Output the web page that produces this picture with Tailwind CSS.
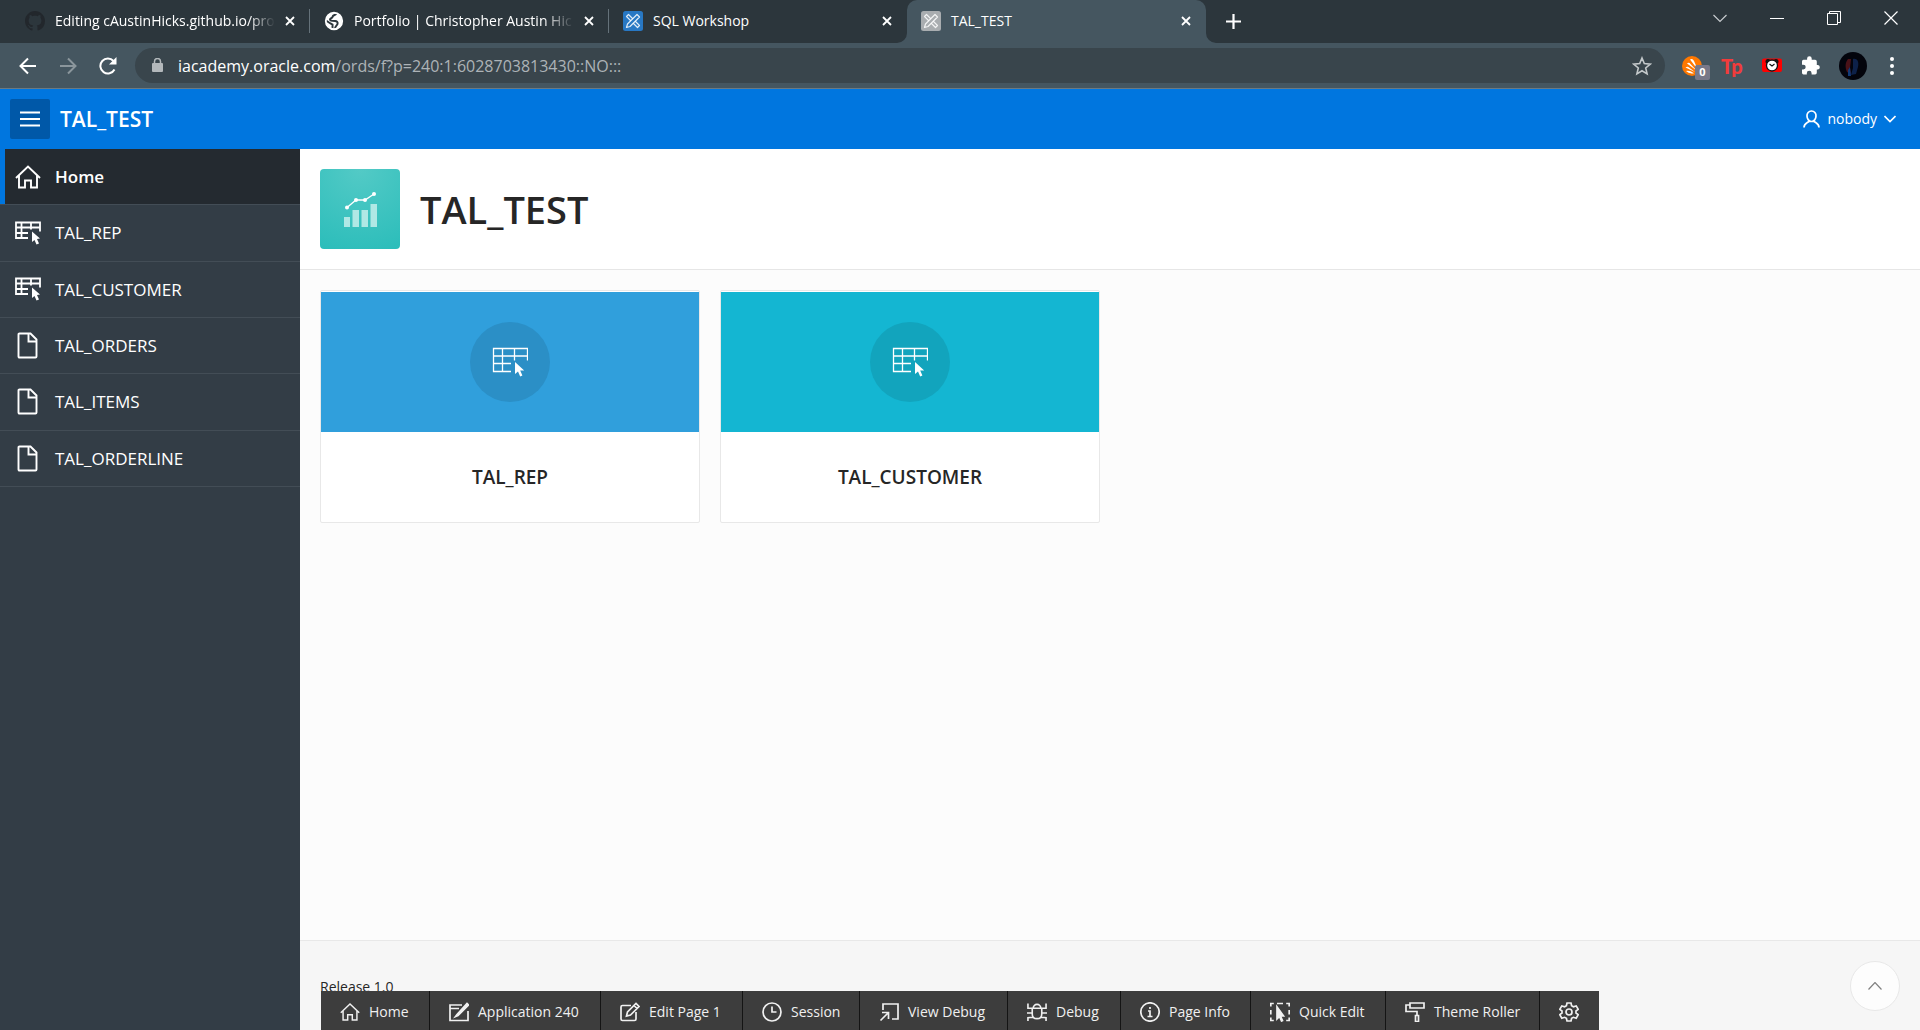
<!DOCTYPE html>
<html lang="en">
<head>
<meta charset="utf-8">
<meta name="viewport" content="width=device-width, initial-scale=1">
<title>TAL_TEST</title>
<script src="https://cdn.jsdelivr.net/npm/@tailwindcss/browser@4"></script>
</head>
<body class="flex min-h-screen flex-col bg-[#fcfcfc] font-['Open_Sans','Noto_Sans',sans-serif] text-[#262626]">

<!-- Shared icons -->
<svg class="hidden" aria-hidden="true">
  <symbol id="home" viewBox="0 0 26 24"><path d="M1 13 13 1.5 25 13M4 10.5V22.5h6v-7h6v7h6V10.5" fill="none" stroke="currentColor" stroke-width="1.9"/></symbol>
  <symbol id="table" viewBox="0 0 36 30"><path d="M19 24.500H1.500V1.500h34v12M1.500 9h34M1.500 16.500h17.500M10.500 1.500v23M22.500 1.500v12" fill="none" stroke="currentColor" stroke-width="1.300"/><path d="M23 15v12l3-2.600 2.200 5 2.200-1-2.200-4.800 4-.2z" fill="currentColor"/></symbol>
  <symbol id="table-small" viewBox="0 0 26 24"><path d="M13 17H1V1.500h24v9M1 6.500h24M1 12h12M6.500 1.500V17M16 1.500v7" fill="none" stroke="currentColor" stroke-width="1.800"/><path d="M17 10.500v10.500l2.500-2 2 4.500 2.500-1-2-4.500 3-.5z" fill="currentColor"/></symbol>
  <symbol id="file" viewBox="0 0 22 27"><path d="M1.500 2.500q0-1 1-1h11l6 6v17q0 1-1 1h-16q-1 0-1-1zM11.500 2v7.500h7.500" fill="none" stroke="currentColor" stroke-width="1.900"/></symbol>
  <symbol id="x" viewBox="0 0 10 10"><path d="m1 1 8 8M9 1 1 9" fill="none" stroke="currentColor" stroke-width="1.800"/></symbol>
  <symbol id="apex" viewBox="0 0 20 20"><rect width="20" height="20" rx="2.500" fill="currentColor"/><g fill="currentColor" stroke="#fff" stroke-opacity=".85" stroke-width="1.200" stroke-linejoin="round"><path d="M3.500 5.500 5.500 3.500l11 11-2 2z"/><path d="m14 3.500 2.500 2.500L7 15.500l-3.500 1 1-3.500z"/></g></symbol>
</svg>

<!-- Browser tabs -->
<div class="flex h-[43px] shrink-0 items-stretch bg-[#2c363c] pl-[10px] text-sm text-white">
  <div class="relative flex w-[300px] items-center gap-[10px] pr-[15px] pb-[2px] pl-[15px]">
    <svg class="size-5 shrink-0 text-[#22272c]" viewBox="0 0 16 16" fill="currentColor"><path d="M8 0C3.580 0 0 3.580 0 8c0 3.540 2.290 6.530 5.470 7.590.4.070.55-.17.55-.38 0-.19-.01-.82-.01-1.490-2.010.37-2.530-.49-2.690-.94-.09-.23-.48-.94-.82-1.130-.28-.15-.68-.52-.01-.53.63-.01 1.080.58 1.230.82.72 1.210 1.870.87 2.330.66.07-.52.28-.87.51-1.070-1.780-.2-3.640-.89-3.640-3.950 0-.87.310-1.590.82-2.150-.08-.2-.36-1.020.08-2.120 0 0 .67-.21 2.200.82.640-.18 1.320-.27 2-.27s1.360.09 2 .27c1.530-1.040 2.200-.82 2.200-.82.440 1.100.160 1.920.080 2.120.510.560.820 1.270.820 2.150 0 3.070-1.870 3.750-3.650 3.950.290.250.540.730.540 1.480 0 1.070-.010 1.930-.010 2.200 0 .210.150.460.550.380A8 8 0 0 0 16 8c0-4.420-3.580-8-8-8"/></svg>
    <span class="min-w-0 flex-1 overflow-hidden whitespace-nowrap [mask-image:linear-gradient(90deg,#000_88%,transparent)]">Editing cAustinHicks.github.io/pro</span>
    <button aria-label="Close tab"><svg class="size-[10px]"><use href="#x"/></svg></button>
    <span class="absolute right-0 h-6 w-px bg-[#65727a]"></span>
  </div>
  <div class="relative flex w-[299px] items-center gap-[10px] pr-[15px] pb-[2px] pl-[14px]">
    <svg class="size-5 shrink-0" viewBox="0 0 20 20"><circle cx="10" cy="10" r="7.900" fill="#fff"/><path d="M12.500 2.500c-1 2-3.500 1-4 3.500-.3 1.500-2.500 1-2.500 2.500s3 1.500 5 1.500 3 1.500 2.500 3-2 1.500-2.500 4.500M2 9.500l4.500 3 2 1v4" fill="none" stroke="#2c363c" stroke-width="2"/><circle cx="10" cy="10" r="8.200" fill="none" stroke="#fff" stroke-width="1.900"/></svg>
    <span class="min-w-0 flex-1 overflow-hidden whitespace-nowrap [mask-image:linear-gradient(90deg,#000_86%,transparent)]">Portfolio | Christopher Austin Hic</span>
    <button aria-label="Close tab"><svg class="size-[10px]"><use href="#x"/></svg></button>
    <span class="absolute right-0 h-6 w-px bg-[#65727a]"></span>
  </div>
  <div class="flex w-[298px] items-center gap-[10px] pr-[15px] pb-[2px] pl-[14px]">
    <svg class="size-5 shrink-0 text-[#2878c4]"><use href="#apex"/></svg>
    <span class="min-w-0 flex-1 whitespace-nowrap">SQL Workshop</span>
    <button aria-label="Close tab"><svg class="size-[10px]"><use href="#x"/></svg></button>
  </div>
  <div class="relative flex w-[299px] items-center gap-[10px] rounded-t-[10px] bg-[#455660] pr-[15px] pb-[2px] pl-[14px]">
    <svg class="absolute bottom-0 -left-[10px] size-[10px]" viewBox="0 0 10 10"><path d="M10 0v10H0A10 10 0 0 0 10 0" fill="#455660"/></svg>
    <svg class="absolute bottom-0 -right-[10px] size-[10px]" viewBox="0 0 10 10"><path d="M0 0v10h10A10 10 0 0 1 0 0" fill="#455660"/></svg>
    <svg class="size-5 shrink-0 text-[#a9adb0]"><use href="#apex"/></svg>
    <span class="min-w-0 flex-1 whitespace-nowrap">TAL_TEST</span>
    <button aria-label="Close tab"><svg class="size-[10px]"><use href="#x"/></svg></button>
  </div>
  <button aria-label="New tab" class="ml-5"><svg class="size-[15px]" viewBox="0 0 15 15"><path d="M7.500 0v15M0 7.500h15" stroke="#fff" stroke-width="2.200"/></svg></button>
  <div class="ml-auto flex items-center gap-[43px] pr-[22px] pb-[7px]">
    <button aria-label="Search tabs"><svg class="size-[14px]" viewBox="0 0 14 14"><path d="m.5 4 6.500 6.500L13.500 4" fill="none" stroke="#c8cccf" stroke-width="1.200"/></svg></button>
    <button aria-label="Minimize"><svg class="size-[14px]" viewBox="0 0 14 14"><path d="M0 7.500h14" stroke="#fff"/></svg></button>
    <button aria-label="Restore"><svg class="size-[14px]" viewBox="0 0 14 14"><path d="M.5 2.500h10v11H.5zM2.500 2.500v-2h11v11h-3" fill="none" stroke="#fff"/></svg></button>
    <button aria-label="Close"><svg class="size-[14px]" viewBox="0 0 14 14"><path d="m.5.5 13 13m0-13-13 13" stroke="#fff" stroke-width="1.200"/></svg></button>
  </div>
</div>

<!-- Address bar -->
<div class="flex h-[46px] shrink-0 items-center border-b border-[#6b7a82] bg-[#455660] pl-[19px] pr-[20px]">
  <div class="flex w-[116px] items-center gap-[22px]">
    <button aria-label="Back"><svg class="size-[18px]" viewBox="0 0 18 18"><path d="M17 9H2M9 1.500 1.500 9 9 16.500" fill="none" stroke="#fff" stroke-width="2"/></svg></button>
    <button aria-label="Forward"><svg class="size-[18px]" viewBox="0 0 18 18"><path d="M1 9h15M9 1.500 16.500 9 9 16.500" fill="none" stroke="#8b969c" stroke-width="2"/></svg></button>
    <button aria-label="Reload"><svg class="size-[18px]" viewBox="0 0 18 18"><path d="M15.500 12.500A7.500 7.500 0 1 1 14.500 4" fill="none" stroke="#fff" stroke-width="2"/><path d="M17.500 0v7.500H10z" fill="#fff"/></svg></button>
  </div>
  <div class="flex h-[35px] flex-1 items-center rounded-full bg-[#39454c] pl-[17px] pr-[13px]">
    <svg class="h-[15px] w-[11px]" viewBox="0 0 11 15"><rect y="5" width="11" height="9" rx="1" fill="#b3b8bb"/><path d="M2.500 5.500V3.500a3 3 0 0 1 6 0v2" fill="none" stroke="#b3b8bb" stroke-width="1.500"/></svg>
    <div class="ml-[15px] flex-1 whitespace-nowrap text-base text-[#adb3b7]"><span class="text-white">iacademy.oracle.com</span>/ords/f?p=240:1:6028703813430::NO:::</div>
    <button aria-label="Bookmark"><svg class="size-[20px]" viewBox="0 0 20 20"><path d="m10 2 2.300 5.600 6 .5-4.600 3.900 1.400 5.900L10 14.700l-5.100 3.200 1.400-5.900L1.700 8.100l6-.5z" fill="none" stroke="#c3c8ca" stroke-width="1.600"/></svg></button>
  </div>
  <div class="ml-[17px] flex w-[218px] items-center justify-between">
    <div class="relative h-7 w-5">
      <svg class="absolute top-1 size-5" viewBox="0 0 20 20"><circle cx="10" cy="10" r="10" fill="#ff7800"/><path d="M8 3.500q2.500-1.500 4 1.500l4 9zM5 7.500q2-1.500 3.500.5l6 6.500zM3.500 11.500q2-1.500 3.500 0l6 4.500zM4 15q3-1 8 2.200-5 1-8-2.200" fill="#fff"/></svg>
      <span class="absolute left-[13px] top-[13px] flex h-[15px] w-[15px] items-center justify-center rounded-xs bg-[#787888] text-[11px] font-bold text-white">0</span>
    </div>
    <span class="flex font-['Lato',sans-serif] text-xl leading-6 font-black text-[#f23b3b]" aria-label="Tp">Tp</span>
    <svg class="h-[15px] w-5" viewBox="0 0 20 15"><rect y=".5" width="20" height="13.500" rx="2" fill="#f00"/><circle cx="6" cy="3.500" r="2.500" fill="#111"/><circle cx="14" cy="3.500" r="2.500" fill="#111"/><circle cx="10" cy="7.500" r="5.500" fill="#fff" stroke="#111" stroke-width="1.300"/><path d="m7.500 6 2.500 2 2.500-2" fill="none" stroke="#111" stroke-width="1.100"/></svg>
    <svg class="size-[19px]" viewBox="0 0 19 19"><path d="M17 9h-1.200V5.500q0-1.700-1.700-1.700h-3.400V2.500a2.300 2.300 0 0 0-4.600 0v1.300H2.500Q1 3.800 1 5.500v3.200h1.300a2.400 2.400 0 0 1 0 4.800H1v3.300q0 1.700 1.500 1.700h3.300v-1.300a2.400 2.400 0 0 1 4.800 0v1.300h3.500q1.700 0 1.700-1.700v-3.300H17A2.300 2.300 0 0 0 17 9" fill="#fff"/></svg>
    <svg class="size-7" viewBox="0 0 28 28"><circle cx="14" cy="14" r="14" fill="#03040c"/><path d="M9 7c-3 4-3 8-1 13l4 2-1-6 1-9z" fill="#4a1218"/><path d="M14 7c5-1 6 4 5 8l-2 7-5 1 2-7z" fill="#0d2149"/><path d="m9 18 2-3 1 9H9z" fill="#123a78"/></svg>
    <button aria-label="Browser menu" class="mr-[6px] pl-1"><svg class="h-[18px] w-1" viewBox="0 0 4 18" fill="#fff"><circle cx="2" cy="2" r="2"/><circle cx="2" cy="9" r="2"/><circle cx="2" cy="16" r="2"/></svg></button>
  </div>
</div>

<!-- Application header -->
<header class="flex h-[60px] shrink-0 items-center bg-[#0076df] px-[10px] text-white">
  <button aria-label="Toggle navigation" class="flex size-10 items-center justify-center rounded-xs bg-[#0058a8]"><svg class="h-4 w-5" viewBox="0 0 20 16"><path d="M0 1.500h20M0 8h20M0 14.500h20" stroke="#fff" stroke-width="2.200"/></svg></button>
  <a href="#" class="ml-[10px] pt-[2px] text-[21px] font-semibold">TAL_TEST</a>
  <button class="ml-auto mr-[14px] flex items-center text-sm">
    <svg class="mr-[7px] h-[18px] w-[17px]" viewBox="0 0 17 18"><path d="M8.500 1a4.500 4.500 0 0 1 4.500 5c0 3-2 5.500-4.500 5.500S4 9 4 6a4.500 4.500 0 0 1 4.500-5M1 17.500c0-4 2-4 5.500-6.500M16 17.500c0-4-2-4-5.500-6.500" fill="none" stroke="#fff" stroke-width="1.700"/></svg>
    nobody
    <svg class="ml-[7px] h-2 w-3" viewBox="0 0 12 8"><path d="m.5 1 5.500 5.500L11.500 1" fill="none" stroke="#fff" stroke-width="1.600"/></svg>
  </button>
</header>

<div class="flex flex-1">
  <nav class="w-[300px] shrink-0 bg-[#333d46] text-[17px] text-white">
    <ul class="grid min-h-[338px] auto-rows-fr *:flex *:border-b *:border-[#434d56]">
      <li><a href="#" class="flex flex-1 items-center border-l-5 border-[#0076df] bg-[#242a30] font-semibold"><svg class="ml-[10px] mr-[14px] h-6 w-[26px]"><use href="#home"/></svg>Home</a></li>
      <li><a href="#" class="flex flex-1 items-center pl-[15px]"><svg class="mr-[14px] h-6 w-[26px]"><use href="#table-small"/></svg>TAL_REP</a></li>
      <li><a href="#" class="flex flex-1 items-center pl-[15px]"><svg class="mr-[14px] h-6 w-[26px]"><use href="#table-small"/></svg>TAL_CUSTOMER</a></li>
      <li><a href="#" class="flex flex-1 items-center pl-[17px]"><svg class="mr-4 h-[27px] w-[22px]"><use href="#file"/></svg>TAL_ORDERS</a></li>
      <li><a href="#" class="flex flex-1 items-center pl-[17px]"><svg class="mr-4 h-[27px] w-[22px]"><use href="#file"/></svg>TAL_ITEMS</a></li>
      <li><a href="#" class="flex flex-1 items-center pl-[17px]"><svg class="mr-4 h-[27px] w-[22px]"><use href="#file"/></svg>TAL_ORDERLINE</a></li>
    </ul>
  </nav>

  <div class="flex min-w-0 flex-1 flex-col">
    <div class="flex items-center gap-5 border-b border-[#e6e6e6] bg-white p-5">
      <div class="flex size-20 items-center justify-center rounded-[4px] bg-[radial-gradient(circle_at_50%_0%,#53cac6,#2bbdba)]">
        <svg class="h-[38px] w-[34px]" viewBox="0 0 34 38"><path d="M1 27h6v10H1zM9.500 20h6.500v17H9.500zM18.500 20H25v17h-6.500zM27.500 14H34v23h-6.500z" fill="#b0e8e5"/><path d="m4 17.500 9-7.500h9L31 4" fill="none" stroke="#fff" stroke-width="1.300"/><g fill="#fff"><circle cx="4" cy="17.500" r="2"/><circle cx="13" cy="10" r="2"/><circle cx="22" cy="10" r="2"/><circle cx="31" cy="4" r="2"/></g></svg>
      </div>
      <h1 class="text-[38px] leading-[48px] font-semibold">TAL_TEST</h1>
    </div>

    <main class="grid flex-1 auto-rows-min grid-cols-4 gap-5 p-5">
      <a href="#" class="block rounded-xs border border-[#e8e8e8] bg-white pt-px">
        <span class="flex h-[140px] items-center justify-center bg-[#309fdc] text-white"><span class="flex size-20 items-center justify-center rounded-full bg-[#2b8fc6]"><svg class="h-[30px] w-9"><use href="#table"/></svg></span></span>
        <span class="flex h-[90px] items-center justify-center text-[19px] font-semibold">TAL_REP</span>
      </a>
      <a href="#" class="block rounded-xs border border-[#e8e8e8] bg-white pt-px">
        <span class="flex h-[140px] items-center justify-center bg-[#14b6d2] text-white"><span class="flex size-20 items-center justify-center rounded-full bg-[#12a4bd]"><svg class="h-[30px] w-9"><use href="#table"/></svg></span></span>
        <span class="flex h-[90px] items-center justify-center text-[19px] font-semibold">TAL_CUSTOMER</span>
      </a>
    </main>

    <footer class="relative flex h-[90px] items-start border-t border-[#e8e8e8] bg-[#f6f6f6] px-5 pt-9 text-sm">
      Release 1.0
      <button aria-label="Back to top" class="absolute right-5 top-5 flex size-[50px] items-center justify-center rounded-full border border-[#e8e8e8] bg-[#fdfdfd]"><svg class="h-2 w-[14px]" viewBox="0 0 14 8"><path d="m.5 7.500 6.500-7 6.500 7" fill="none" stroke="#808080" stroke-width="1.200"/></svg></button>
    </footer>
  </div>
</div>

<!-- Developer toolbar, pinned over the page -->
<div role="toolbar" aria-label="Developer toolbar" class="fixed bottom-0 left-1/2 flex h-[39px] -translate-x-1/2 whitespace-nowrap bg-[#3d3d3d] text-sm text-[#f0f0f0] *:flex *:items-center *:gap-[9px] *:border-r *:border-[#141414] *:pt-[2px] *:pl-[19px] [&_svg]:size-5 [&_svg]:shrink-0 [&_svg]:fill-none [&_svg]:stroke-current [&_svg]:stroke-[1.700]">
  <button class="w-[109px]"><svg><use href="#home"/></svg>Home</button>
  <button class="w-[171px]"><svg viewBox="0 0 20 20"><path d="M13 3H1v15.500h18V9M1 6.500h9"/><path d="M8 12.500 18 1.500l1.500 1.500L9 13.500l-2.500 1z" fill="currentColor"/></svg>Application 240</button>
  <button class="w-[142px]"><svg viewBox="0 0 20 20"><path d="M11 3.500H2.500Q1 3.500 1 5v12q0 1.500 1.500 1.500h12q1.500 0 1.500-1.500V10M6.500 14l1-4L16 1.500l3 3L10.500 13zM14 3.500l3 3"/></svg>Edit Page 1</button>
  <button class="w-[117px]"><svg viewBox="0 0 20 20"><circle cx="10" cy="10" r="9"/><path d="M10 4.500V10h4.500"/></svg>Session</button>
  <button class="w-[148px]"><svg viewBox="0 0 20 20"><path d="M4 8V2h15v15h-6M1.500 18.500l8-8M3 10.500h6.500V17"/></svg>View Debug</button>
  <button class="w-[113px]"><svg viewBox="0 0 21 20"><path d="M5.500 6h10v6q0 5-5 5t-5-5zM6.500 6a4 4 0 0 1 8 0M1 1v5h4.500M20 1v5h-4.500M0 11h5.500M21 11h-5.500M1 19.500V16l5-.5M20 19.500V16l-5-.5"/></svg>Debug</button>
  <button class="w-[130px]"><svg viewBox="0 0 20 20"><circle cx="10" cy="10" r="9.200"/><path d="M8 9h2v5.500M7.500 14.500h5M10 5v2"/></svg>Page Info</button>
  <button class="w-[135px]"><svg viewBox="0 0 20 20"><path d="M.8 4.500V1.500h3M7 1.500h6M16.200 1.500h3v3M19.200 8v4.500M19.200 15.500v3h-3M.8 8v4.500M.8 15.500v3h3"/><path d="M7 5v12l2.500-2.500 2 4.500 1-.5-2-4.500h3z" fill="currentColor"/></svg>Quick Edit</button>
  <button class="w-[154px]"><svg viewBox="0 0 20 20"><path d="M5 1h14v5H5zM5 3H1v6.500h11v4M10.500 13.500h3v6h-3z"/></svg>Theme Roller</button>
  <button class="w-[59px] border-r-0!" aria-label="Options"><svg viewBox="0 0 20 20"><path d="M8 1h4l.6 2.800 1.800 1 2.800-.9 2 3.500L17 9v2l2.200 1.700-2 3.500-2.800-.9-1.800 1L12 19H8l-.6-2.700-1.800-1-2.800.9-2-3.500L3 11V9L.8 7.400l2-3.500 2.800.9 1.800-1z"/><circle cx="10" cy="10" r="3"/></svg></button>
</div>
</body>
</html>
